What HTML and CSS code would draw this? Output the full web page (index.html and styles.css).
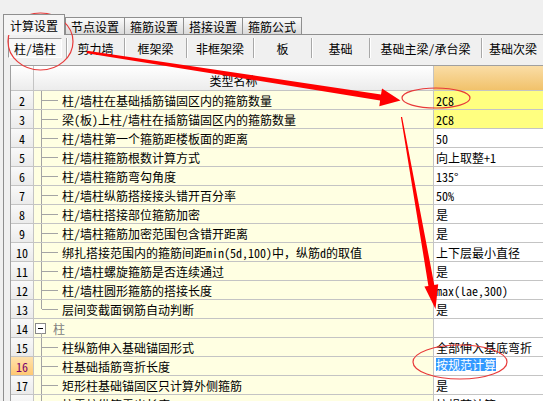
FILE: index.html
```html
<!DOCTYPE html>
<html lang="zh-CN">
<head>
<meta charset="utf-8">
<title>计算设置</title>
<link rel="stylesheet" href="styles.css">
</head>
<body>
<div class="tabs">
  <div class="tab active">计算设置</div>
  <div class="tab first">节点设置</div>
  <div class="tab">箍筋设置</div>
  <div class="tab">搭接设置</div>
  <div class="tab">箍筋公式</div>
</div>
<div class="panel">
  <div class="subtabs">
    <div class="sub s0"><span class="pressed">柱/墙柱</span></div>
    <div class="sub s1">剪力墙</div>
    <div class="sub s2">框架梁</div>
    <div class="sub s3">非框架梁</div>
    <div class="sub s4">板</div>
    <div class="sub s5">基础</div>
    <div class="sub s6">基础主梁/承台梁</div>
    <div class="sub s7">基础次梁</div>
  </div>
  <div class="grid">
    <div class="row head"><div class="num"></div><div class="name">类型名称</div><div class="val"></div></div>
    <div class="row"><div class="num">2</div><div class="name t">柱/墙柱在基础插筋锚固区内的箍筋数量</div><div class="val hl">2C8</div></div>
    <div class="row"><div class="num">3</div><div class="name t">梁(板)上柱/墙柱在插筋锚固区内的箍筋数量</div><div class="val hl">2C8</div></div>
    <div class="row"><div class="num">4</div><div class="name t">柱/墙柱第一个箍筋距楼板面的距离</div><div class="val">50</div></div>
    <div class="row"><div class="num">5</div><div class="name t">柱/墙柱箍筋根数计算方式</div><div class="val">向上取整+1</div></div>
    <div class="row"><div class="num">6</div><div class="name t">柱/墙柱箍筋弯勾角度</div><div class="val">135°</div></div>
    <div class="row"><div class="num">7</div><div class="name t">柱/墙柱纵筋搭接接头错开百分率</div><div class="val">50%</div></div>
    <div class="row"><div class="num">8</div><div class="name t">柱/墙柱搭接部位箍筋加密</div><div class="val">是</div></div>
    <div class="row"><div class="num">9</div><div class="name t">柱/墙柱箍筋加密范围包含错开距离</div><div class="val">是</div></div>
    <div class="row"><div class="num">10</div><div class="name t">绑扎搭接范围内的箍筋间距min(5d,100)中，纵筋d的取值</div><div class="val">上下层最小直径</div></div>
    <div class="row"><div class="num">11</div><div class="name t">柱/墙柱螺旋箍筋是否连续通过</div><div class="val">是</div></div>
    <div class="row"><div class="num">12</div><div class="name t">柱/墙柱圆形箍筋的搭接长度</div><div class="val">max(lae,300)</div></div>
    <div class="row"><div class="num">13</div><div class="name t last">层间变截面钢筋自动判断</div><div class="val">是</div></div>
    <div class="row"><div class="num">14</div><div class="name g"><span class="box"></span><span class="gtext">柱</span></div><div class="val"></div></div>
    <div class="row"><div class="num">15</div><div class="name t">柱纵筋伸入基础锚固形式</div><div class="val">全部伸入基底弯折</div></div>
    <div class="row"><div class="num cur">16</div><div class="name t">柱基础插筋弯折长度</div><div class="val"><span class="sel">按规范计算</span></div></div>
    <div class="row"><div class="num">17</div><div class="name t">矩形柱基础锚固区只计算外侧箍筋</div><div class="val">是</div></div>
    <div class="row"><div class="num">18</div><div class="name t">抗震柱纵筋露出长度</div><div class="val">按规范计算</div></div>
  </div>
</div>
<svg class="annot" width="543" height="401" viewBox="0 0 543 401">
  <ellipse cx="40.5" cy="41.5" rx="32.5" ry="28.5" fill="none" stroke="#e83a3a" stroke-width="1.2"/>
  <ellipse cx="436" cy="98" rx="34" ry="10" fill="none" stroke="#e83a3a" stroke-width="1.2"/>
  <ellipse cx="460" cy="362" rx="47" ry="17" fill="none" stroke="#e83a3a" stroke-width="1.2"/>
  <polygon fill="#ff0000" points="87.2,50.8 381,94.4 382,88.5 400.5,100.5 379.3,106.3 380.1,100.4 86.8,53.2"/>
  <polygon fill="#ff0000" points="402.1,116.9 434.3,284.9 438.2,284.2 435.5,309 424.4,286.6 428.4,285.9 400.9,117.1"/>
</svg>
</body>
</html>
```
FILE: styles.css
```css
* { box-sizing: border-box; }
html, body { margin: 0; padding: 0; }
body {
  width: 543px;
  height: 401px;
  overflow: hidden;
  position: relative;
  background: #f0f0f0;
  color: #000;
  font-family: "Noto Sans Mono CJK SC", "Noto Sans CJK SC", sans-serif;
  font-size: 12px;
}

/* top tabs */
.tabs {
  display: flex;
  align-items: flex-end;
  height: 34px;
  padding-left: 3px;
}
.tab {
  flex: none;
  width: 60px;
  height: 17px;
  margin-left: -1px;
  border: 1px solid #8f8f8f;
  border-bottom: none;
  background: linear-gradient(#fbfbfb, #dadada);
  display: flex;
  align-items: center;
  justify-content: center;
  padding-top: 1px;
  white-space: nowrap;
}
.tab.first { margin-left: 0; }
.tab.active {
  width: 62px;
  height: 21px;
  margin-left: 0;
  margin-bottom: -1px;
  padding-top: 0;
  background: #f5f5f5;
  position: relative;
  z-index: 1;
}

.panel {
  margin-left: 3px;
  border-left: 1px solid #8f8f8f;
  border-top: 1px solid #8f8f8f;
  height: 367px;
}

/* secondary tab bar */
.subtabs {
  display: flex;
  height: 20px;
  margin-top: 3px;
}
.sub {
  flex: none;
  height: 20px;
  border-right: 1px solid #a8a8a8;
  box-shadow: 1px 0 0 #ffffff;
  display: flex;
  align-items: center;
  justify-content: center;
  white-space: nowrap;
}
.s0 { width: 63px; justify-content: flex-start; padding-left: 4px; }
.s1 { width: 58px; }
.s2 { width: 62px; }
.s3 { width: 67px; }
.s4 { width: 58px; }
.s5 { width: 58px; }
.s6 { width: 112px; }
.s7 { width: 62px; border-right: none; box-shadow: none; }
.pressed {
  width: 54px;
  height: 20px;
  border: 1px solid;
  border-color: #9a9a9a #ffffff #ffffff #9a9a9a;
  background: #f8f8f8;
  display: flex;
  align-items: center;
  justify-content: center;
}

/* property grid */
.grid {
  margin: 7px 0 0 6px;
  border-left: 1px solid #a0a0a0;
  border-top: 1px solid #a0a0a0;
}
.row {
  display: flex;
  height: 19px;
  border-bottom: 1px solid #c4c4c4;
}
.num {
  flex: none;
  width: 23px;
  border-right: 1px solid #c4c4c4;
  background: linear-gradient(#f9f9f9, #ebebeb);
  display: flex;
  align-items: center;
  justify-content: center;
}
.num.cur {
  background: linear-gradient(#ffe2ad, #ffc873);
  color: #7a006e;
}
.name {
  flex: none;
  width: 400px;
  border-right: 1px solid #c4c4c4;
  background: #ffffe2;
  padding-left: 28px;
  display: flex;
  align-items: center;
  white-space: nowrap;
  position: relative;
}
.val {
  flex: 1;
  background: #ffffff;
  padding-left: 2px;
  display: flex;
  align-items: center;
  white-space: nowrap;
  overflow: hidden;
}
.val.hl { background: #ffff80; }
.sel {
  background: #3399ff;
  color: #ffffff;
  line-height: 13px;
  margin-top: -3px;
}

.row.head { height: 25px; }
.head .num { background: linear-gradient(#ffffff, #ececec); }
.head .name {
  background: linear-gradient(#ffffff, #ececec);
  justify-content: center;
  padding: 5px 0 0 0;
}
.head .val { background: linear-gradient(#fadda6, #f1c26b); }

/* tree lines */
.t::before {
  content: "";
  position: absolute;
  left: 7px;
  top: 0;
  bottom: 0;
  border-left: 1px solid #a4a4a4;
}
.t::after {
  content: "";
  position: absolute;
  left: 8px;
  width: 16px;
  top: 9px;
  border-top: 1px solid #a4a4a4;
}
.t.last::before { bottom: 9px; }
.name.g { padding-left: 1px; }
.g::after {
  content: "";
  position: absolute;
  left: 7px;
  top: 14px;
  bottom: 0;
  border-left: 1px solid #a4a4a4;
}
.box {
  flex: none;
  width: 11px;
  height: 11px;
  border: 1px solid #8a8a8a;
  background: #ffffff;
  margin-right: 7px;
  display: flex;
  align-items: center;
  justify-content: center;
}
.box::before {
  content: "";
  width: 5px;
  height: 1px;
  background: #000000;
}
.gtext { color: #808080; }

/* red annotation overlay */
.annot {
  position: absolute;
  left: 0;
  top: 0;
  pointer-events: none;
}
```
